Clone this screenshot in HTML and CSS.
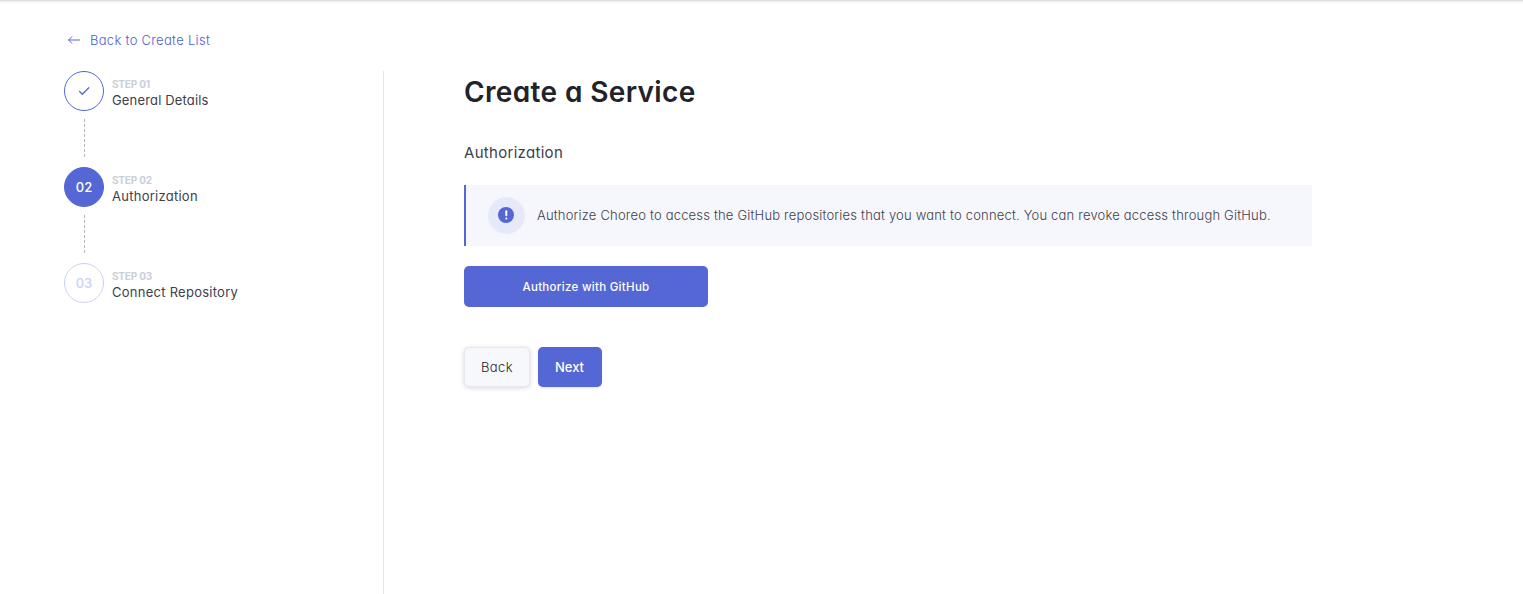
FILE: index.html
```html
<!DOCTYPE html>
<html lang="en">
<head>
<meta charset="utf-8">
<title>Create a Service</title>
<link rel="stylesheet" href="styles.css">
</head>
<body>
<div class="topline"></div>
<div class="page">
  <a class="back-link" href="#">
    <svg width="12" height="10" viewBox="0 0 12 10" fill="none" stroke="#5567d5" stroke-linecap="round" stroke-linejoin="round"><path d="M3.8 1.8.6 5 3.8 8.2M.8 5h10.8"/></svg>
    <span class="back-text">Back to Create List</span>
  </a>
  <div class="layout">
    <aside class="steps">
      <div class="step done">
        <div class="circle"><svg width="12" height="10" viewBox="0 0 12 10" fill="none" stroke="currentColor" stroke-width="1.3" stroke-linecap="round" stroke-linejoin="round"><path d="M1.6 5.5 4.3 8.2 10.8 1.7"/></svg></div>
        <div class="labels"><span class="number">STEP 01</span><span class="name first">General Details</span></div>
      </div>
      <div class="connector"></div>
      <div class="step active">
        <div class="circle">02</div>
        <div class="labels"><span class="number">STEP 02</span><span class="name">Authorization</span></div>
      </div>
      <div class="connector"></div>
      <div class="step pending">
        <div class="circle">03</div>
        <div class="labels"><span class="number">STEP 03</span><span class="name">Connect Repository</span></div>
      </div>
    </aside>
    <main class="content">
      <h1>Create a Service</h1>
      <h2>Authorization</h2>
      <div class="notice">
        <div class="notice-icon"><svg width="16" height="16" viewBox="0 0 16 16"><circle cx="8" cy="8" r="8" fill="#5567d5"/><path d="M8.3 4.3v4" stroke="#fff" stroke-width="2" stroke-linecap="round"/><circle cx="8.3" cy="11.5" r="1" fill="#fff"/></svg></div>
        <span class="notice-text">Authorize Choreo to access the GitHub repositories that you want to connect. You can revoke access through GitHub.</span>
      </div>
      <button class="btn authorize">Authorize with GitHub</button>
      <div class="actions">
        <button class="btn back">Back</button>
        <button class="btn next">Next</button>
      </div>
    </main>
  </div>
</div>
</body>
</html>
```
FILE: styles.css
```css
* { box-sizing: border-box; }
body {
  margin: 0;
  height: 594px;
  overflow: hidden;
  background: #fff;
  color: #40404b;
  font-family: Inter, "Liberation Sans", sans-serif;
  font-feature-settings: "cv11";
  white-space: nowrap;
}
.topline { height: 4px; background: linear-gradient(#dedee3 1px, #ededf0 1px, #fff 4px); }
.page {
  height: 590px;
  display: flex;
  flex-direction: column;
  padding: 26px 64px 0;
}
.back-link {
  display: flex;
  align-items: center;
  height: 20px;
  padding-left: 4px;
  gap: 10px;
  color: #4f60d2;
  font-size: 13px;
  font-weight: 300;
  letter-spacing: 0.3px;
  text-decoration: none;
}
.layout { display: flex; flex: 1; margin-top: 21px; }
.steps { width: 320px; border-right: 1px solid #e3e4e9; }
.step { display: flex; gap: 8px; height: 40px; }
.circle {
  display: flex;
  align-items: center;
  justify-content: center;
  width: 40px;
  height: 40px;
  border: 1px solid #5567d5;
  border-radius: 50%;
  color: #5567d5;
  font-size: 13px;
  font-weight: 500;
}
.active .circle { background: #5567d5; color: #fff; }
.pending .circle { border-color: #ccd1f2; color: #ccd1f2; }
.labels { display: flex; flex-direction: column; align-items: flex-start; padding-top: 7px; }
.number { color: #cbcedb; font-size: 10px; font-weight: 700; line-height: 13px; letter-spacing: -0.2px; }
.name { font-size: 13px; font-weight: 400; line-height: 19px; letter-spacing: 0.26px; }
.first { letter-spacing: 0.16px; }
.connector { width: 0; height: 38px; margin: 8px 0 10px 20px; border-left: 1px dashed #b5b6bd; }
.content { width: 928px; padding-left: 80px; }
h1 { margin: 3px 0 0; color: #222228; font-size: 28px; font-weight: 600; line-height: 36px; letter-spacing: 0.36px; }
h2 { margin: 33px 0 0; font-size: 15px; font-weight: 400; line-height: 20px; letter-spacing: 0.3px; }
.notice {
  display: flex;
  align-items: center;
  gap: 12px;
  height: 61px;
  margin-top: 22px;
  padding-left: 22px;
  border-left: 2px solid #5567d5;
  background: #f6f7fc;
  font-size: 13px;
  font-weight: 300;
}
.notice-text { padding-bottom: 2px; letter-spacing: 0.19px; }
.notice-icon {
  display: flex;
  align-items: center;
  justify-content: center;
  width: 37px;
  height: 37px;
  padding: 0 1px 1px 0;
  border-radius: 50%;
  background: #e6e9fa;
}
.btn {
  display: flex;
  align-items: center;
  justify-content: center;
  padding: 0;
  border: 0;
  border-radius: 5px;
  background: #5567d5;
  color: #fff;
  font: 500 13px Inter, "Liberation Sans", sans-serif;
  font-feature-settings: inherit;
}
.authorize { width: 244px; height: 41px; margin-top: 20px; font-size: 11.5px; letter-spacing: 0.3px; }
.actions { display: flex; gap: 8px; margin-top: 40px; }
.actions .btn { height: 40px; }
.actions .back {
  width: 66px;
  border: 1px solid #e6e7ef;
  background: #f7f8fc;
  color: #25252d;
  font-weight: 300;
  letter-spacing: 0.4px;
  box-shadow: 0 1px 5px rgba(0, 0, 0, .16);
}
.next { width: 64px; padding-right: 1px; box-shadow: 0 1px 2px rgba(0, 0, 0, .12); }
```
